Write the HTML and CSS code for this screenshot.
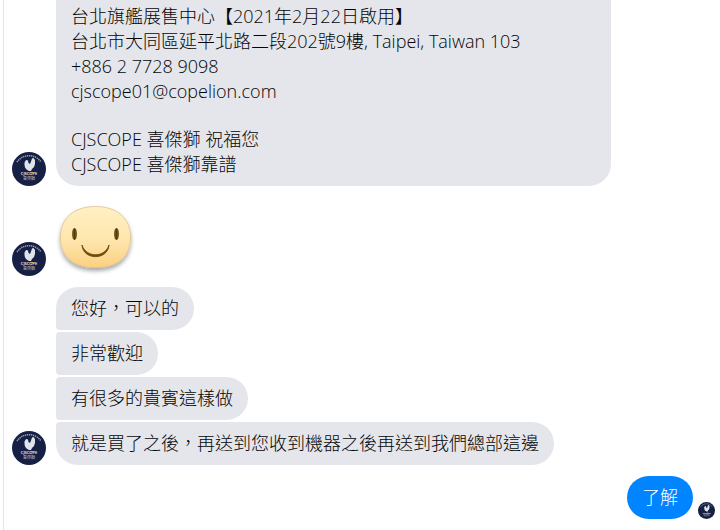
FILE: index.html
```
<!DOCTYPE html>
<html lang="zh-Hant-TW">
<head>
    <meta charset="UTF-8">
    <meta name="viewport" content="width=device-width, initial-scale=1.0">
    <title>CJSCOPE 喜傑獅</title>
    <link rel="stylesheet" href="styles.css">
</head>
<body>
    <div class="app">
        <aside class="sidebar"></aside>
        <main class="chat">
            <div class="row">
                <svg class="avatar" viewBox="0 0 68 68" role="img" aria-label="CJSCOPE">
                    <!-- the other avatars reuse this group -->
                    <g id="logo">
                        <circle cx="34" cy="34" r="34" fill="#162044"/>
                        <path d="M10 20 A29 29 0 0 1 58 20" fill="none" stroke="#9aa2b6" stroke-width="3" stroke-dasharray="2.6 1.4"/>
                        <path d="M25 21 L28 16 L32 17 L33 22 L36 24 L38 19 L40 13 L43 12 L46 16 L46 24 L44 30 L40 34 L38 38 L34 38 L29 35 L26 31 L25 26 Z" fill="#dfe4eb"/>
                        <text class="logo-name" x="34" y="46" text-anchor="middle">CJSCOPE</text>
                        <path d="M37 41 h5" stroke="#d9b23c" stroke-width="2"/>
                        <text class="logo-sub" x="34" y="56" text-anchor="middle">喜傑獅</text>
                    </g>
                </svg>
                <div class="bubble long">
                    <p>台北旗艦展售中心【2021年2月22日啟用】<br>
                    台北市大同區延平北路二段202號9樓, Taipei, Taiwan 103<br>
                    +886 2 7728 9098<br>
                    cjscope01@copelion.com</p>
                    <p>CJSCOPE 喜傑獅 祝福您<br>
                    CJSCOPE 喜傑獅靠譜</p>
                </div>
            </div>

            <div class="row">
                <svg class="avatar" viewBox="0 0 68 68" role="img" aria-label="CJSCOPE"><use href="#logo"/></svg>
                <svg class="sticker" viewBox="0 0 79 79" role="img" aria-label="微笑貼圖">
                    <defs>
                        <linearGradient id="face" x1="0" y1="0" x2="0" y2="1">
                            <stop offset="0" stop-color="#fff0c4"/>
                            <stop offset="0.55" stop-color="#ffe6ad"/>
                            <stop offset="1" stop-color="#fbd080"/>
                        </linearGradient>
                        <linearGradient id="eye" x1="0" y1="0" x2="1" y2="0">
                            <stop offset="0" stop-color="#917631"/>
                            <stop offset="0.5" stop-color="#4f3a06"/>
                            <stop offset="1" stop-color="#917631"/>
                        </linearGradient>
                        <filter id="shadow" x="-20%" y="-20%" width="140%" height="150%">
                            <feDropShadow dx="0" dy="3" stdDeviation="2" flood-color="#000" flood-opacity="0.35"/>
                        </filter>
                    </defs>
                    <path d="M39.500 9.500 C61 9.500 74.500 21 74.500 40 C74.500 58 64 70.500 39.500 70.500 C15 70.500 4.500 58 4.500 40 C4.500 21 18 9.500 39.500 9.500 Z" fill="url(#face)" stroke="#dcc38c" stroke-width="0.8" filter="url(#shadow)"/>
                    <ellipse cx="18.500" cy="37" rx="2.600" ry="6" fill="url(#eye)"/>
                    <ellipse cx="60.500" cy="37" rx="2.600" ry="6" fill="url(#eye)"/>
                    <path d="M26 48 C27 63.500 52 63.500 53 48 C49 61 30 61 26 48 Z" fill="#6b4d0c" stroke="#6b4d0c" stroke-width="0.9" stroke-linejoin="round"/>
                </svg>
            </div>

            <div class="row">
                <svg class="avatar" viewBox="0 0 68 68" role="img" aria-label="CJSCOPE"><use href="#logo"/></svg>
                <div class="stack">
                    <p class="bubble">您好，可以的</p>
                    <p class="bubble">非常歡迎</p>
                    <p class="bubble">有很多的貴賓這樣做</p>
                    <p class="bubble">就是買了之後，再送到您收到機器之後再送到我們總部這邊</p>
                </div>
            </div>

            <div class="row sent">
                <p class="bubble">了解</p>
                <svg class="seen" viewBox="0 0 68 68" role="img" aria-label="已讀"><use href="#logo"/></svg>
            </div>
        </main>
    </div>
</body>
</html>
```
FILE: styles.css
```
* {
    box-sizing: border-box;
}
body {
    margin: 0;
    background: #fff;
    color: #050505;
    font-family: "Open Sans", "Noto Sans CJK TC", sans-serif;
    font-size: 18px;
    font-weight: 300;
    line-height: 25px;
}
p {
    margin: 0;
}
.app {
    display: flex;
    min-height: 100vh;
}
.sidebar {
    width: 4px;
    border-right: 1px solid #e4e4e4;
}
.chat {
    flex: 1;
    display: flex;
    flex-direction: column;
    gap: 11px;
    padding: 0 5px 11px 8px;
}
.row {
    display: flex;
    align-items: flex-end;
    gap: 10px;
}
.avatar {
    flex: none;
    width: 34px;
    height: 34px;
}
.logo-name {
    font: 600 8px "Open Sans", sans-serif;
    fill: #fff;
}
.logo-sub {
    font: 8px "Noto Sans CJK TC", sans-serif;
    fill: #b4bac8;
}

/* messages */
.bubble {
    padding: 9px 15px;
    background: #e4e6eb;
    border-radius: 4px 22px 22px 4px;
}
.bubble.long {
    flex: 1;
    max-width: 555px;
    padding-top: 4px;
    border-radius: 0 0 22px 22px;
}
.bubble.long p + p {
    margin-top: 23px;
}
.stack {
    display: flex;
    flex-direction: column;
    align-items: flex-start;
    gap: 2px;
}
.stack .bubble:first-child {
    border-top-left-radius: 22px;
}
.stack .bubble:last-child {
    border-bottom-left-radius: 22px;
}
.sticker {
    width: 79px;
    height: 79px;
}

.sent {
    justify-content: flex-end;
    gap: 5px;
}
.sent .bubble {
    background: #0084ff;
    border-radius: 22px;
    color: #fff;
}
.seen {
    width: 17px;
    height: 17px;
}
```
